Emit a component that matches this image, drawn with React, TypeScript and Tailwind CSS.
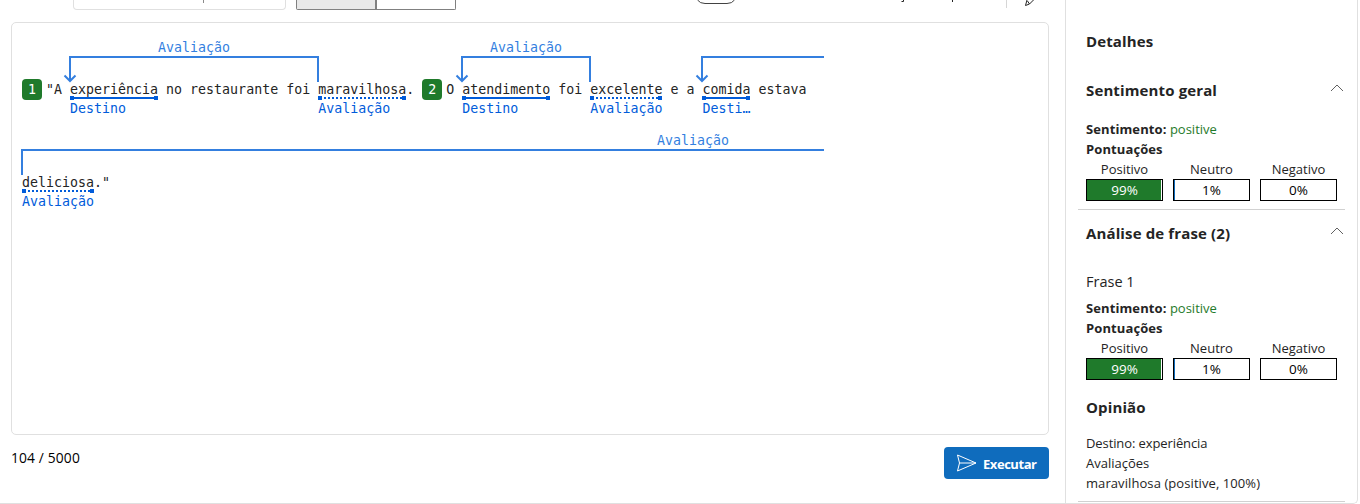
import React from "react";

const mono = "font-['DejaVu_Sans_Mono','Liberation_Mono',monospace] text-[13.289px] tracking-[0.018px]";

function Entity({ text, label, dotted = false }: { text: string; label: string; dotted?: boolean }) {
  return (
    <span className="flex flex-col">
      <span className="h-[18px] leading-[23px]">{text}</span>
      <span className="flex h-1 items-center">
        <span className="size-1 bg-[#015cda]" />
        {dotted ? (
          <span className="h-0.5 grow bg-[repeating-linear-gradient(90deg,transparent_0_2px,#015cda_2px_4px)]" />
        ) : (
          <span className="h-0.5 grow bg-[#015cda]" />
        )}
        <span className="size-1 bg-[#015cda]" />
      </span>
      <span className="h-[18px] leading-[18px] text-[#015cda]">{label}</span>
    </span>
  );
}

function Plain({ children }: { children: string }) {
  return <span className="h-[18px] leading-[23px] whitespace-pre">{children}</span>;
}

function Badge({ n }: { n: number }) {
  return (
    <span className="mt-px mr-1 flex h-[21px] w-5 items-center justify-center rounded-[4px] bg-[#1f7a2b] text-white">
      {n}
    </span>
  );
}

function Score({ name, value, fill, tone }: { name: string; value: string; fill: string; tone: string }) {
  return (
    <div className="w-[77px] text-center">
      <div className="h-5 leading-5">{name}</div>
      <div className={`flex h-[22px] border border-black ${fill}`}>
        <span className={`grow text-[13.5px] leading-5 ${tone}`}>{value}</span>
      </div>
    </div>
  );
}

function Scores() {
  return (
    <div>
      <div className="h-5 leading-5">
        <b className="font-bold tracking-[0.1px]">Sentimento:</b>{" "}
        <span className="text-[#1f7a2b]">positive</span>
      </div>
      <div className="h-5 leading-5 font-bold tracking-[0.1px]">Pontuações</div>
      <div className="flex gap-2.5">
        <Score name="Positivo" value="99%" tone="text-white" fill="bg-[linear-gradient(90deg,#1f7a2b_74px,#fff_74px)]" />
        <Score name="Neutro" value="1%" tone="text-black" fill="bg-[linear-gradient(90deg,#0f6cbd_1px,#fff_1px)]" />
        <Score name="Negativo" value="0%" tone="text-black" fill="bg-white" />
      </div>
    </div>
  );
}

function Heading({ children, open = false }: { children: string; open?: boolean }) {
  return (
    <div className="flex h-6 items-start justify-between">
      <h2 className="text-[15px] leading-[22px] font-bold tracking-[0.13px]">{children}</h2>
      {open && (
        <svg width="14" height="10" viewBox="0 0 14 10" fill="none" stroke="#616161" className="mt-1">
          <path d="M1 8 7 2l6 6" />
        </svg>
      )}
    </div>
  );
}

export default function App() {
  return (
    <div className="flex h-[504px] w-[1360px] overflow-hidden bg-white font-['Open_Sans','Noto_Sans',sans-serif] text-[13px] text-[#242424]">
      <main className="flex w-[1065px] flex-col border-b border-[#e0e0e0] pl-[11px]">
        <header className="flex h-[22px] items-start">
          <div className="ml-[62px] flex h-[10px] w-[213px] rounded-b-[4px] border border-t-0 border-[#e0e0e0] pl-[129px]">
            <span className="h-[3px] w-px bg-[#8a8a8a]" />
          </div>
          <div className="ml-[10px] flex h-[10px] w-40 rounded-b-[2px] border border-t-0 border-[#808080]">
            <span className="w-[78px] bg-[#e8e8e8]" />
            <span className="w-0.5 bg-[#808080]" />
          </div>
          <svg width="593" height="22" viewBox="456 0 593 22" fill="none">
            <path d="M697.500 0Q700 3.500 705 3.500h22q5 0 7.500-3.500" stroke="#424242" />
            <path d="M903.500 0v1.500h-2M952.500 0v2" stroke="#242424" />
            <path d="M1006.500 0v8" stroke="#d6d6d6" />
            <path d="M1027 0l-1.500 5.500 4-1.500 4-4M1029.500 4l-2-3" stroke="#242424" />
          </svg>
        </header>

        <section className="flex h-[413px] w-[1038px] flex-col rounded-[5px] border border-[#e0e0e0] pt-[15px] pl-[10px]">
          <div className={`${mono} relative h-[93px] w-[802px] pt-10`}>
            <div className="flex items-start">
              <Badge n={1} />
              <Plain>{'"A '}</Plain>
              <Entity text="experiência" label="Destino" />
              <Plain>{" no restaurante foi "}</Plain>
              <Entity text="maravilhosa" label="Avaliação" dotted />
              <Plain>{". "}</Plain>
              <Badge n={2} />
              <Plain>{"O "}</Plain>
              <Entity text="atendimento" label="Destino" />
              <Plain>{" foi "}</Plain>
              <Entity text="excelente" label="Avaliação" dotted />
              <Plain>{" e a "}</Plain>
              <Entity text="comida" label="Desti…" />
              <Plain>{" estava"}</Plain>
            </div>
            <svg className="absolute top-0 left-0" width="802" height="50" viewBox="22 38 802 50" fill="none" stroke="#347fdf" strokeWidth="2">
              <path d="M70 81V57h248v25M462 81V57h128v25M702 81V57h122" />
              <path d="M64.500 75.500l5.500 5.500 5.500-5.500M456.500 75.500l5.500 5.500 5.500-5.500M696.500 75.500l5.500 5.500 5.500-5.500" />
            </svg>
            <span className="absolute top-0 left-[136px] leading-[19px] text-[#347fdf]">Avaliação</span>
            <span className="absolute top-0 left-[468px] leading-[19px] text-[#347fdf]">Avaliação</span>
          </div>
          <div className={`${mono} relative h-[93px] w-[802px] pt-10`}>
            <div className="flex items-start">
              <Entity text="deliciosa" label="Avaliação" dotted />
              <Plain>{'."'}</Plain>
            </div>
            <svg className="absolute top-0 -left-px" width="803" height="50" viewBox="21 131 803 50" fill="none" stroke="#347fdf" strokeWidth="2">
              <path d="M22 175v-25h802" />
            </svg>
            <span className="absolute top-0 left-[635px] leading-[19px] text-[#347fdf]">Avaliação</span>
          </div>
        </section>

        <footer className="flex h-11 w-[1038px] items-end justify-between">
          <span className="mb-[11px] text-[13.8px] leading-5 tracking-[0.15px] text-black">104 / 5000</span>
          <button className="flex h-8 w-[105px] items-center rounded-[4px] bg-[#0f6cbd] pl-[13px] text-white">
            <svg width="20" height="18" viewBox="0 0 20 18" fill="none" stroke="white">
              <path d="M.5 1 19 9 .5 17l2-8zM2.500 9H19" />
            </svg>
            <span className="ml-[6px] pt-[3px] font-bold tracking-[-0.45px]">Executar</span>
          </button>
        </footer>
      </main>

      <aside className="w-[293px] rounded-br-[5px] border-x border-b border-[#e0e0e0] pt-[30px]">
        <div className="pl-5">
          <Heading>Detalhes</Heading>
        </div>
        <div className="ml-3 h-[156px] w-[267px] border-b border-[#d1d1d1] pt-[25px] pr-[1px] pl-2">
          <Heading open>Sentimento geral</Heading>
          <div className="pt-4">
            <Scores />
          </div>
        </div>
        <div className="ml-3 h-[292px] w-[267px] border-b border-[#d1d1d1] pt-3 pr-[1px] pl-2">
          <Heading open>Análise de frase (2)</Heading>
          <h3 className="mt-[26px] h-5 text-[14.5px] leading-5">Frase 1</h3>
          <div className="pt-1.5">
            <Scores />
          </div>
          <div className="pt-4">
            <Heading>Opinião</Heading>
          </div>
          <p className="pt-[13px] leading-5">
            <span className="tracking-[-0.1px]">Destino: experiência</span>
            <br />
            Avaliações
            <br />
            <span className="tracking-[0.08px]">maravilhosa (positive, 100%)</span>
          </p>
        </div>
      </aside>
    </div>
  );
}
